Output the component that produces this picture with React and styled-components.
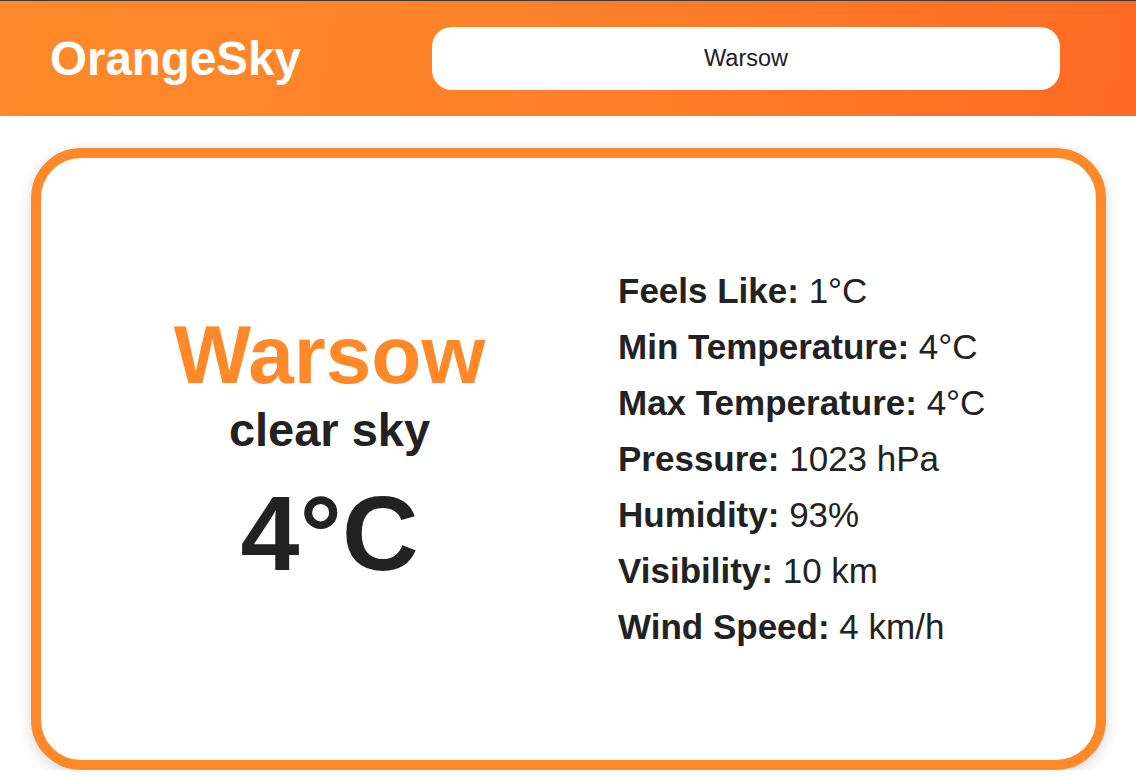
import { useState } from "react";
import styled, { createGlobalStyle } from "styled-components";

const GlobalStyle = createGlobalStyle`
  * {
    box-sizing: border-box;
  }
  body {
    margin: 0;
    background: #ffffff;
    font-family: "Liberation Sans", Arial, Helvetica, sans-serif;
    color: #222222;
  }
`;

const Header = styled.header`
  height: 116px;
  border-top: 1px solid #3a3a3a;
  background: linear-gradient(100deg, #ff8a2a 0%, #ff7f28 55%, #ff6a25 100%);
  display: flex;
  align-items: center;
  justify-content: space-between;
  padding: 0 76px 0 50px;
`;

const Logo = styled.h1`
  margin: 0;
  font-size: 47.5px;
  font-weight: 700;
  color: #ffffff;
`;

const Search = styled.input`
  width: 628px;
  height: 63px;
  border: none;
  border-radius: 20px;
  background: #ffffff;
  text-align: center;
  font-family: inherit;
  font-size: 23.5px;
  color: #222222;
  outline: none;
`;

const Main = styled.main`
  padding: 32px 30px 0 31px;
`;

const Card = styled.section`
  height: 622px;
  border: 10px solid #ff8829;
  border-radius: 50px;
  box-shadow: 0 4px 14px rgba(0, 0, 0, 0.16);
  display: grid;
  grid-template-columns: 577px 1fr;
  align-items: center;
`;

const Summary = styled.div`
  display: flex;
  flex-direction: column;
  align-items: center;
  padding-bottom: 18px;
`;

const City = styled.h2`
  margin: 0;
  font-size: 82px;
  line-height: 1;
  font-weight: 700;
  color: #ff8829;
`;

const Description = styled.p`
  margin: 10px 0 0;
  font-size: 47px;
  line-height: 1;
  font-weight: 700;
`;

const Temperature = styled.p`
  margin: 27px 0 0;
  font-size: 106px;
  line-height: 1;
  font-weight: 700;
`;

const Details = styled.ul`
  list-style: none;
  margin: 0;
  padding: 0;
`;

const Detail = styled.li`
  font-size: 35px;
  line-height: 56px;
  white-space: nowrap;
`;

const Label = styled.strong`
  font-weight: 700;
`;

const weather = {
  city: "Warsow",
  description: "clear sky",
  temp: 4,
  details: [
    ["Feels Like", "1°C"],
    ["Min Temperature", "4°C"],
    ["Max Temperature", "4°C"],
    ["Pressure", "1023 hPa"],
    ["Humidity", "93%"],
    ["Visibility", "10 km"],
    ["Wind Speed", "4 km/h"],
  ],
};

function App() {
  const [query, setQuery] = useState("Warsow");

  return (
    <>
      <GlobalStyle />
      <Header>
        <Logo>OrangeSky</Logo>
        <Search value={query} onChange={(e) => setQuery(e.target.value)} />
      </Header>
      <Main>
        <Card>
          <Summary>
            <City>{weather.city}</City>
            <Description>{weather.description}</Description>
            <Temperature>{weather.temp}°C</Temperature>
          </Summary>
          <Details>
            {weather.details.map(([label, value]) => (
              <Detail key={label}>
                <Label>{label}:</Label> {value}
              </Detail>
            ))}
          </Details>
        </Card>
      </Main>
    </>
  );
}

export default App;
